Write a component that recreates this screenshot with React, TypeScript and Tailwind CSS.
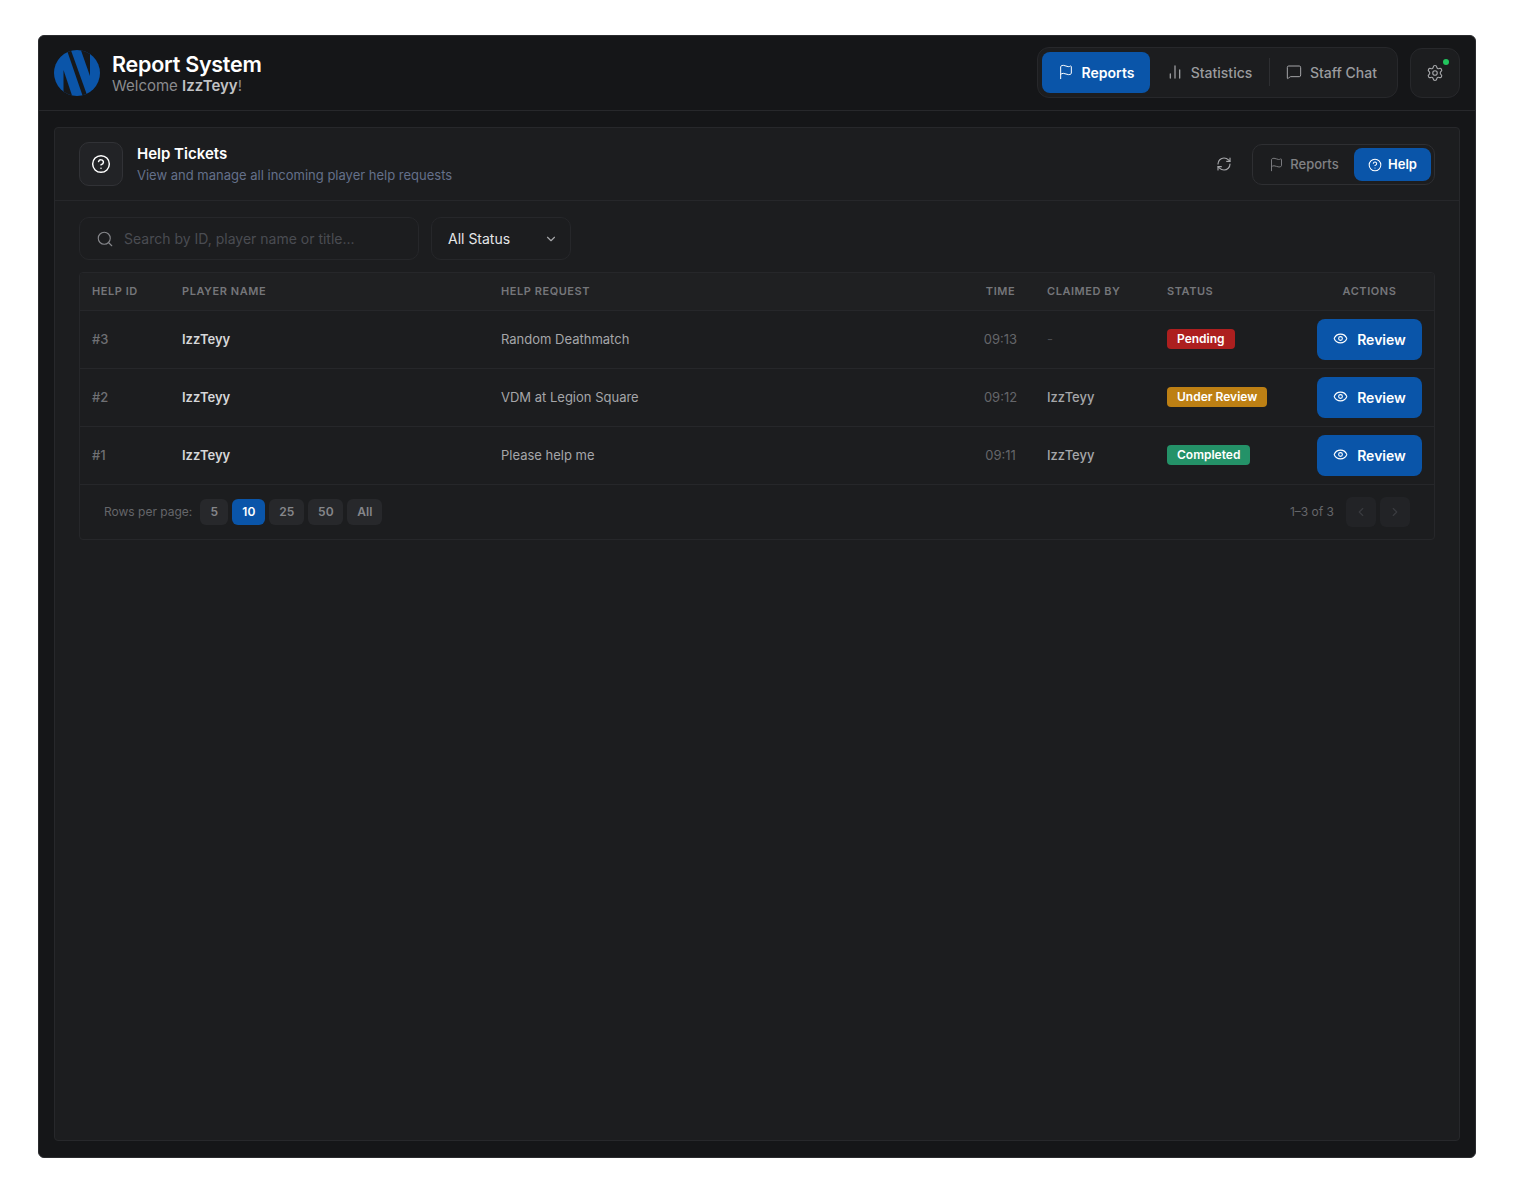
import React from "react";
import { Flag, ChartNoAxesColumn, MessageSquare, Settings, CircleHelp, RefreshCw, Search, ChevronDown, Eye, ChevronLeft, ChevronRight } from "lucide-react";

const rows = [
  { id: "#3", name: "IzzTeyy", req: "Random Deathmatch", time: "09:13", by: "-", status: "Pending", color: "bg-[#ad1f1f]" },
  { id: "#2", name: "IzzTeyy", req: "VDM at Legion Square", time: "09:12", by: "IzzTeyy", status: "Under Review", color: "bg-[#bd8014]" },
  { id: "#1", name: "IzzTeyy", req: "Please help me", time: "09:11", by: "IzzTeyy", status: "Completed", color: "bg-[#249268]" },
];

function Logo() {
  return (
    <svg width="46" height="46" viewBox="0 0 46 46" className="shrink-0">
      <defs>
        <clipPath id="c"><circle cx="23" cy="23" r="23" /></clipPath>
      </defs>
      <g clipPath="url(#c)">
        <rect width="46" height="46" fill="#0b55a9" />
        <polygon points="12.5,-1 16.5,-1 33,45 29,47" fill="#17181a" />
        <polygon points="26.5,-1 36,-1 36,26" fill="#17181a" />
        <polygon points="9.5,20 9.5,47 18.5,47" fill="#17181a" />
      </g>
    </svg>
  );
}

export default function App() {
  return (
    <div className="min-h-[1193px] bg-white pt-[35px] pl-[38px] font-['Inter',sans-serif]">
      <div className="flex h-[1123px] w-[1438px] flex-col overflow-hidden rounded-[6px] border border-[#2a2b2e] bg-[#151618]">
        <header className="flex h-[75px] shrink-0 items-center justify-between border-b border-[#27282b] pl-[15px] pr-[15px]">
          <div className="flex items-center gap-[12px]">
            <Logo />
            <div>
              <div className="text-[21.5px] leading-[26px] font-semibold tracking-[-0.25px] text-white">Report System</div>
              <div className="text-[15px] leading-[18px] text-[#8a8b8e]">
                Welcome <span className="font-semibold text-[#c2c3c5]">IzzTeyy</span>!
              </div>
            </div>
          </div>
          <div className="flex items-center gap-[12px]">
            <nav className="-mt-[2px] flex h-[51px] items-center rounded-[12px] border border-[#27282b] bg-[#1c1d1f] pl-[4px] pr-[4px]">
              <div className="flex h-[41px] w-[108px] items-center justify-center gap-[8px] rounded-[8px] bg-[#0a55a9] pt-[2px] text-sm font-semibold text-white">
                <Flag size={16} strokeWidth={1.5} className="-translate-y-px" /> Reports
              </div>
              <div className="flex h-[41px] w-[119px] items-center justify-center gap-[8px] pt-[2px] text-sm font-medium text-[#9a9b9e]">
                <ChartNoAxesColumn size={16} strokeWidth={2} className="-translate-y-px" /> Statistics
              </div>
              <div className="h-[28px] w-px bg-[#2e2f32]" />
              <div className="flex h-[41px] w-[123px] items-center justify-center gap-[8px] pt-[2px] text-sm font-medium text-[#9a9b9e]">
                <MessageSquare size={16} strokeWidth={1.5} className="-translate-y-px text-[#a5a6a9]" /> Staff Chat
              </div>
            </nav>
            <div className="relative flex h-[50px] w-[50px] items-center justify-center rounded-[12px] border border-[#27282b] bg-[#1c1d1f] text-[#a5a6a9]">
              <Settings size={18} strokeWidth={1.5} />
              <span className="absolute top-[10px] right-[10px] h-[6px] w-[6px] rounded-full bg-[#22c55e]" />
            </div>
          </div>
        </header>

        <main className="flex min-h-0 flex-1 px-[15px] pt-[16px] pb-[16px]">
          <section className="flex flex-1 flex-col rounded-[4px] border border-[#27282b] bg-[#1c1d1f]">
            <div className="flex h-[73px] shrink-0 items-center justify-between border-b border-[#26272a] pl-[24px] pr-[24px]">
              <div className="flex items-center gap-[14px]">
                <div className="flex h-[44px] w-[44px] items-center justify-center rounded-[10px] border border-[#313236] bg-[#222326] text-white">
                  <CircleHelp size={20} strokeWidth={1.75} />
                </div>
                <div>
                  <div className="text-[15px] leading-[20px] font-semibold text-white">Help Tickets</div>
                  <div className="mt-[1px] text-[13px] leading-[20px] text-[#64708a]">View and manage all incoming player help requests</div>
                </div>
              </div>
              <div className="flex items-center gap-[20px]">
                <RefreshCw size={16} strokeWidth={1.75} className="text-[#a5a6a9]" />
                <div className="flex h-[41px] items-center rounded-[10px] border border-[#2e2f32] pl-[3px] pr-[3px]">
                  <div className="flex h-[33px] w-[96px] items-center justify-center gap-[6px] pt-px mr-[2px] text-[13px] font-medium text-[#808184]">
                    <Flag size={15} strokeWidth={1.5} /> Reports
                  </div>
                  <div className="flex h-[33px] w-[77px] items-center justify-center gap-[6px] rounded-[8px] bg-[#0a55a9] pt-px text-[13px] font-semibold text-white">
                    <CircleHelp size={14} strokeWidth={1.75} /> Help
                  </div>
                </div>
              </div>
            </div>

            <div className="flex flex-col gap-[12px] px-[24px] pt-[16px]">
              <div className="flex gap-[12px]">
                <div className="flex h-[43px] w-[340px] items-center gap-[10px] rounded-[10px] border border-[#26272a] pl-[16px] text-sm text-[#4a4c52]">
                  <Search size={18} strokeWidth={1.5} className="text-[#85868a]" />
                  Search by ID, player name or title...
                </div>
                <div className="flex h-[43px] w-[140px] items-center justify-between rounded-[10px] border border-[#26272a] pl-[16px] pr-[12px] text-sm text-[#e5e6e8]">
                  All Status
                  <ChevronDown size={14} strokeWidth={2} className="text-[#a5a6a9]" />
                </div>
              </div>

              <div className="overflow-hidden rounded-[4px] border border-[#26272a]">
                <table className="w-full table-fixed border-collapse text-left">
                  <colgroup>
                    <col className="w-[90px]" />
                    <col className="w-[319px]" />
                    <col className="w-[477px]" />
                    <col className="w-[69px]" />
                    <col className="w-[120px]" />
                    <col className="w-[150px]" />
                    <col className="w-[129px]" />
                  </colgroup>
                  <thead>
                    <tr className="h-[37px] border-b border-[#26272a] bg-[#1f2022] text-[11px] font-semibold tracking-[0.55px] text-[#75767a]">
                      <th className="pl-[12px] font-semibold">HELP ID</th>
                      <th className="pl-[12px] font-semibold">PLAYER NAME</th>
                      <th className="pl-[12px] font-semibold">HELP REQUEST</th>
                      <th className="text-center font-semibold">TIME</th>
                      <th className="pl-[12px] font-semibold">CLAIMED BY</th>
                      <th className="pl-[12px] font-semibold">STATUS</th>
                      <th className="text-center font-semibold">ACTIONS</th>
                    </tr>
                  </thead>
                  <tbody>
                    {rows.map((r) => (
                      <tr key={r.id} className="h-[58px] border-b border-[#26272a] text-[13px]">
                        <td className="pt-[2px] pl-[12px] font-medium text-[#6f7074]">{r.id}</td>
                        <td className="pt-[2px] pl-[12px] font-semibold text-[#d6d7d9]">{r.name}</td>
                        <td className="pt-[2px] pl-[12px] text-[#a5a6a9]">{r.req}</td>
                        <td className="pt-[2px] text-center text-[#65666a]">{r.time}</td>
                        <td className={"pt-[2px] pl-[12px] " + (r.by === "-" ? "text-[#4a4b4f]" : "font-medium text-[#a5a6a9]")}>{r.by}</td>
                        <td className="pl-[12px]">
                          <span className={"inline-block h-[20px] rounded-[4px] px-[10px] text-[12px] leading-[19px] font-semibold text-white " + r.color}>{r.status}</span>
                        </td>
                        <td>
                          <div className="flex justify-center">
                            <div className="flex h-[41px] w-[105px] items-center justify-center gap-[9px] rounded-[8px] bg-[#0a55a9] pt-[2px] text-sm font-semibold text-white">
                              <Eye size={15} strokeWidth={1.75} className="-translate-y-[2px]" /> Review
                            </div>
                          </div>
                        </td>
                      </tr>
                    ))}
                  </tbody>
                </table>
                <div className="flex h-[54px] items-center justify-between pl-[24px] pr-[24px]">
                  <div className="flex items-center">
                    <span className="mr-[8px] text-[12px] text-[#65666a]">Rows per page:</span>
                    <div className="flex gap-[4px] text-[12px] font-semibold text-[#85868a]">
                      <span className="flex h-[26px] w-[28px] items-center justify-center rounded-[6px] bg-[#27282b]">5</span>
                      <span className="flex h-[26px] w-[33px] items-center justify-center rounded-[6px] bg-[#0a55a9] text-white">10</span>
                      <span className="flex h-[26px] w-[35px] items-center justify-center rounded-[6px] bg-[#27282b]">25</span>
                      <span className="flex h-[26px] w-[35px] items-center justify-center rounded-[6px] bg-[#27282b]">50</span>
                      <span className="flex h-[26px] w-[35px] items-center justify-center rounded-[6px] bg-[#27282b]">All</span>
                    </div>
                  </div>
                  <div className="flex items-center">
                    <span className="mr-[12px] text-[12px] text-[#65666a]">1–3 of 3</span>
                    <div className="flex gap-[4px] text-[#3a3b3f]">
                      <span className="flex h-[30px] w-[30px] items-center justify-center rounded-[6px] bg-[#222326]"><ChevronLeft size={14} /></span>
                      <span className="flex h-[30px] w-[30px] items-center justify-center rounded-[6px] bg-[#222326]"><ChevronRight size={14} /></span>
                    </div>
                  </div>
                </div>
              </div>
            </div>
          </section>
        </main>
      </div>
    </div>
  );
}
